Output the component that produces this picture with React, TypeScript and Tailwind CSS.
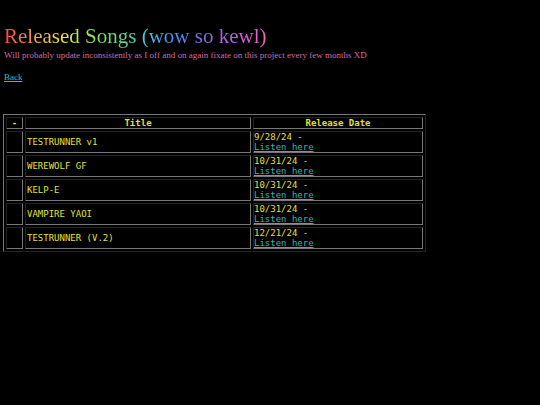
import React from "react";

interface Song {
  title: string;
  date: string;
}

const songs: Song[] = [
  { title: "TESTRUNNER v1", date: "9/28/24" },
  { title: "WEREWOLF GF", date: "10/31/24" },
  { title: "KELP-E", date: "10/31/24" },
  { title: "VAMPIRE YAOI", date: "10/31/24" },
  { title: "TESTRUNNER (V.2)", date: "12/21/24" },
];

const cell = "border border-[#777] [border-style:inset] p-0 align-middle";

export default function App() {
  return (
    <div className="min-h-[405px] bg-black px-[4px] pt-[24px] [font-family:Liberation_Serif,Times_New_Roman,serif]">
      {/* heading */}
      <h1 className="inline-block bg-clip-text text-[21px] leading-[24px] text-transparent [background-image:linear-gradient(90deg,#f04848_0%,#f0a048_12%,#f0e048_22%,#68e060_40%,#48c8d0_53%,#4c90f0_64%,#8868e0_78%,#d058e0_90%,#f068b0_100%)]">
        Released Songs (wow so kewl)
      </h1>
      <p className="text-[9px] leading-[11px] text-[#d868a8]">
        Will probably update inconsistently as I off and on again fixate on this project every few months XD
      </p>
      <div className="mt-[11px] text-[9px] leading-[11px]">
        <a href="#" className="text-[#30c0c0] underline">
          Back
        </a>
      </div>

      <table className="-ml-[1px] mt-[31px] w-[423px] border-separate border-spacing-[2px] border border-[#777] [border-style:outset] [font-family:DejaVu_Sans_Mono,monospace] text-[9px] leading-[10px] text-[#e0e038]">
        <thead>
          <tr>
            <th className={`${cell} w-[17px] text-center font-bold`}>-</th>
            <th className={`${cell} w-[226px] text-center font-bold`}>Title</th>
            <th className={`${cell} text-center font-bold`}>Release Date</th>
          </tr>
        </thead>
        <tbody>
          {songs.map((s) => (
            <tr key={s.title}>
              <td className={cell}></td>
              <td className={`${cell} pl-[1px] text-left`}>{s.title}</td>
              <td className={`${cell} text-left`}>
                {s.date} -
                <br />
                <a href="#" className="text-[#28b8c0] underline">
                  Listen here
                </a>
              </td>
            </tr>
          ))}
        </tbody>
      </table>
    </div>
  );
}
